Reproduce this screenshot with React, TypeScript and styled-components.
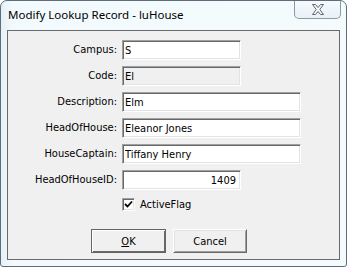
import React from "react";
import styled, { createGlobalStyle } from "styled-components";

const GlobalStyle = createGlobalStyle`
  html, body { margin: 0; padding: 0; background: #ffffff; }
  * { box-sizing: border-box; }
`;

const Window = styled.div`
  width: 347px;
  height: 267px;
  border: 1px solid #5f6d7b;
  border-radius: 7px 7px 3px 3px;
  background: linear-gradient(90deg, #e6f1f8 0px, #f2fafd 12px, #f4fbfd 100%);
  display: flex;
  flex-direction: column;
  overflow: hidden;
`;

const TitleBar = styled.div`
  height: 29px;
  display: flex;
  align-items: flex-start;
  justify-content: space-between;
  padding-left: 7px;
`;

const TitleText = styled.div`
  font-family: "Noto Sans", "Open Sans", sans-serif;
  font-size: 11.5px;
  line-height: 16px;
  padding-top: 6px;
  color: #000;
`;

const CloseButton = styled.div`
  width: 47px;
  height: 19px;
  margin-top: -1px;
  margin-right: 5px;
  border: 1px solid #8d99a6;
  border-top: none;
  border-radius: 0 0 5px 5px;
  background: linear-gradient(#f6fbfe, #e8f1f7);
  display: flex;
  align-items: center;
  justify-content: center;
  padding-top: 1px;
`;

const Client = styled.div`
  flex: 1;
  margin: 0 6px 6px 6px;
  border: 1px solid #6a6a6a;
  background: #f0f0f0;
  padding-top: 9px;
  font-family: "DejaVu Sans Condensed", "DejaVu Sans", sans-serif;
  font-size: 11px;
  color: #000;
`;

const Form = styled.div`
  display: grid;
  grid-template-columns: 109px auto;
  column-gap: 5px;
  row-gap: 6px;
  align-items: center;
  justify-items: start;
`;

const Label = styled.label`
  justify-self: end;
  line-height: 20px;
  white-space: nowrap;
`;

const TextBox = styled.input<{ $w: number; $ro?: boolean; $right?: boolean }>`
  width: ${(p) => p.$w}px;
  height: 20px;
  margin: 0;
  padding: 0 ${(p) => (p.$right ? 4 : 2)}px 0 2px;
  font: inherit;
  color: #000;
  text-align: ${(p) => (p.$right ? "right" : "left")};
  background: ${(p) => (p.$ro ? "#f0f0f0" : "#ffffff")};
  border-style: solid;
  border-width: 1px;
  border-color: #a0a0a0 #ffffff #ffffff #a0a0a0;
  box-shadow: inset 1px 1px 0 #696969, inset -1px -1px 0 #e3e3e3;
  outline: none;
`;

const CheckRow = styled.div`
  grid-column: 2;
  display: flex;
  align-items: center;
  gap: 5px;
  height: 13px;
  margin-top: 2px;
  line-height: 13px;
`;

const CheckBox = styled.div`
  width: 13px;
  height: 13px;
  flex: none;
  background: #ffffff;
  border-style: solid;
  border-width: 1px;
  border-color: #a0a0a0 #ffffff #ffffff #a0a0a0;
  box-shadow: inset 1px 1px 0 #696969, inset -1px -1px 0 #e3e3e3;
  display: flex;
  align-items: center;
  justify-content: center;
`;

const ButtonRow = styled.div`
  display: flex;
  gap: 7px;
  padding-left: 83px;
  margin-top: 18px;
`;

const Button = styled.div<{ $default?: boolean }>`
  width: ${(p) => (p.$default ? 75 : 74)}px;
  height: 24px;
  display: flex;
  align-items: center;
  justify-content: center;
  background: #f0f0f0;
  border-style: solid;
  border-width: 1px;
  border-color: ${(p) =>
    p.$default ? "#646464" : "#ffffff #696969 #696969 #ffffff"};
  box-shadow: ${(p) =>
    p.$default
      ? "inset 1px 1px 0 #ffffff, inset -1px -1px 0 #696969"
      : "inset 1px 1px 0 #e3e3e3, inset -1px -1px 0 #a0a0a0"};
`;

const U = styled.span`
  text-decoration: underline;
  text-underline-offset: 1px;
`;

const rows: { label: string; value: string; w: number; ro?: boolean; right?: boolean }[] = [
  { label: "Campus:", value: "S", w: 119 },
  { label: "Code:", value: "El", w: 119, ro: true },
  { label: "Description:", value: "Elm", w: 179 },
  { label: "HeadOfHouse:", value: "Eleanor Jones", w: 179 },
  { label: "HouseCaptain:", value: "Tiffany Henry", w: 179 },
  { label: "HeadOfHouseID:", value: "1409", w: 119, right: true },
];

export default function App() {
  return (
    <>
      <GlobalStyle />
      <Window>
        <TitleBar>
          <TitleText>Modify Lookup Record - luHouse</TitleText>
          <CloseButton>
            <svg width="12" height="11" viewBox="0 0 12 11">
              <polygon
                points="0.5,0.5 3.5,0.5 6,3.5 8.5,0.5 11.5,0.5 7.8,5.5 11.5,10.5 8.5,10.5 6,7.5 3.5,10.5 0.5,10.5 4.2,5.5"
                fill="#f7f7f7"
                stroke="#5e6670"
                strokeWidth="1"
                strokeLinejoin="round"
              />
            </svg>
          </CloseButton>
        </TitleBar>
        <Client>
          <Form>
            {rows.map((r) => (
              <React.Fragment key={r.label}>
                <Label>{r.label}</Label>
                <TextBox
                  $w={r.w}
                  $ro={r.ro}
                  $right={r.right}
                  value={r.value}
                  readOnly
                />
              </React.Fragment>
            ))}
            <CheckRow>
              <CheckBox>
                <svg width="9" height="9" viewBox="0 0 9 9">
                  <path d="M1 4 L3.5 6.5 L8 1.5" fill="none" stroke="#000" strokeWidth="1.8" />
                </svg>
              </CheckBox>
              <span>ActiveFlag</span>
            </CheckRow>
          </Form>
          <ButtonRow>
            <Button $default>
              <span>
                <U>O</U>K
              </span>
            </Button>
            <Button>Cancel</Button>
          </ButtonRow>
        </Client>
      </Window>
    </>
  );
}
